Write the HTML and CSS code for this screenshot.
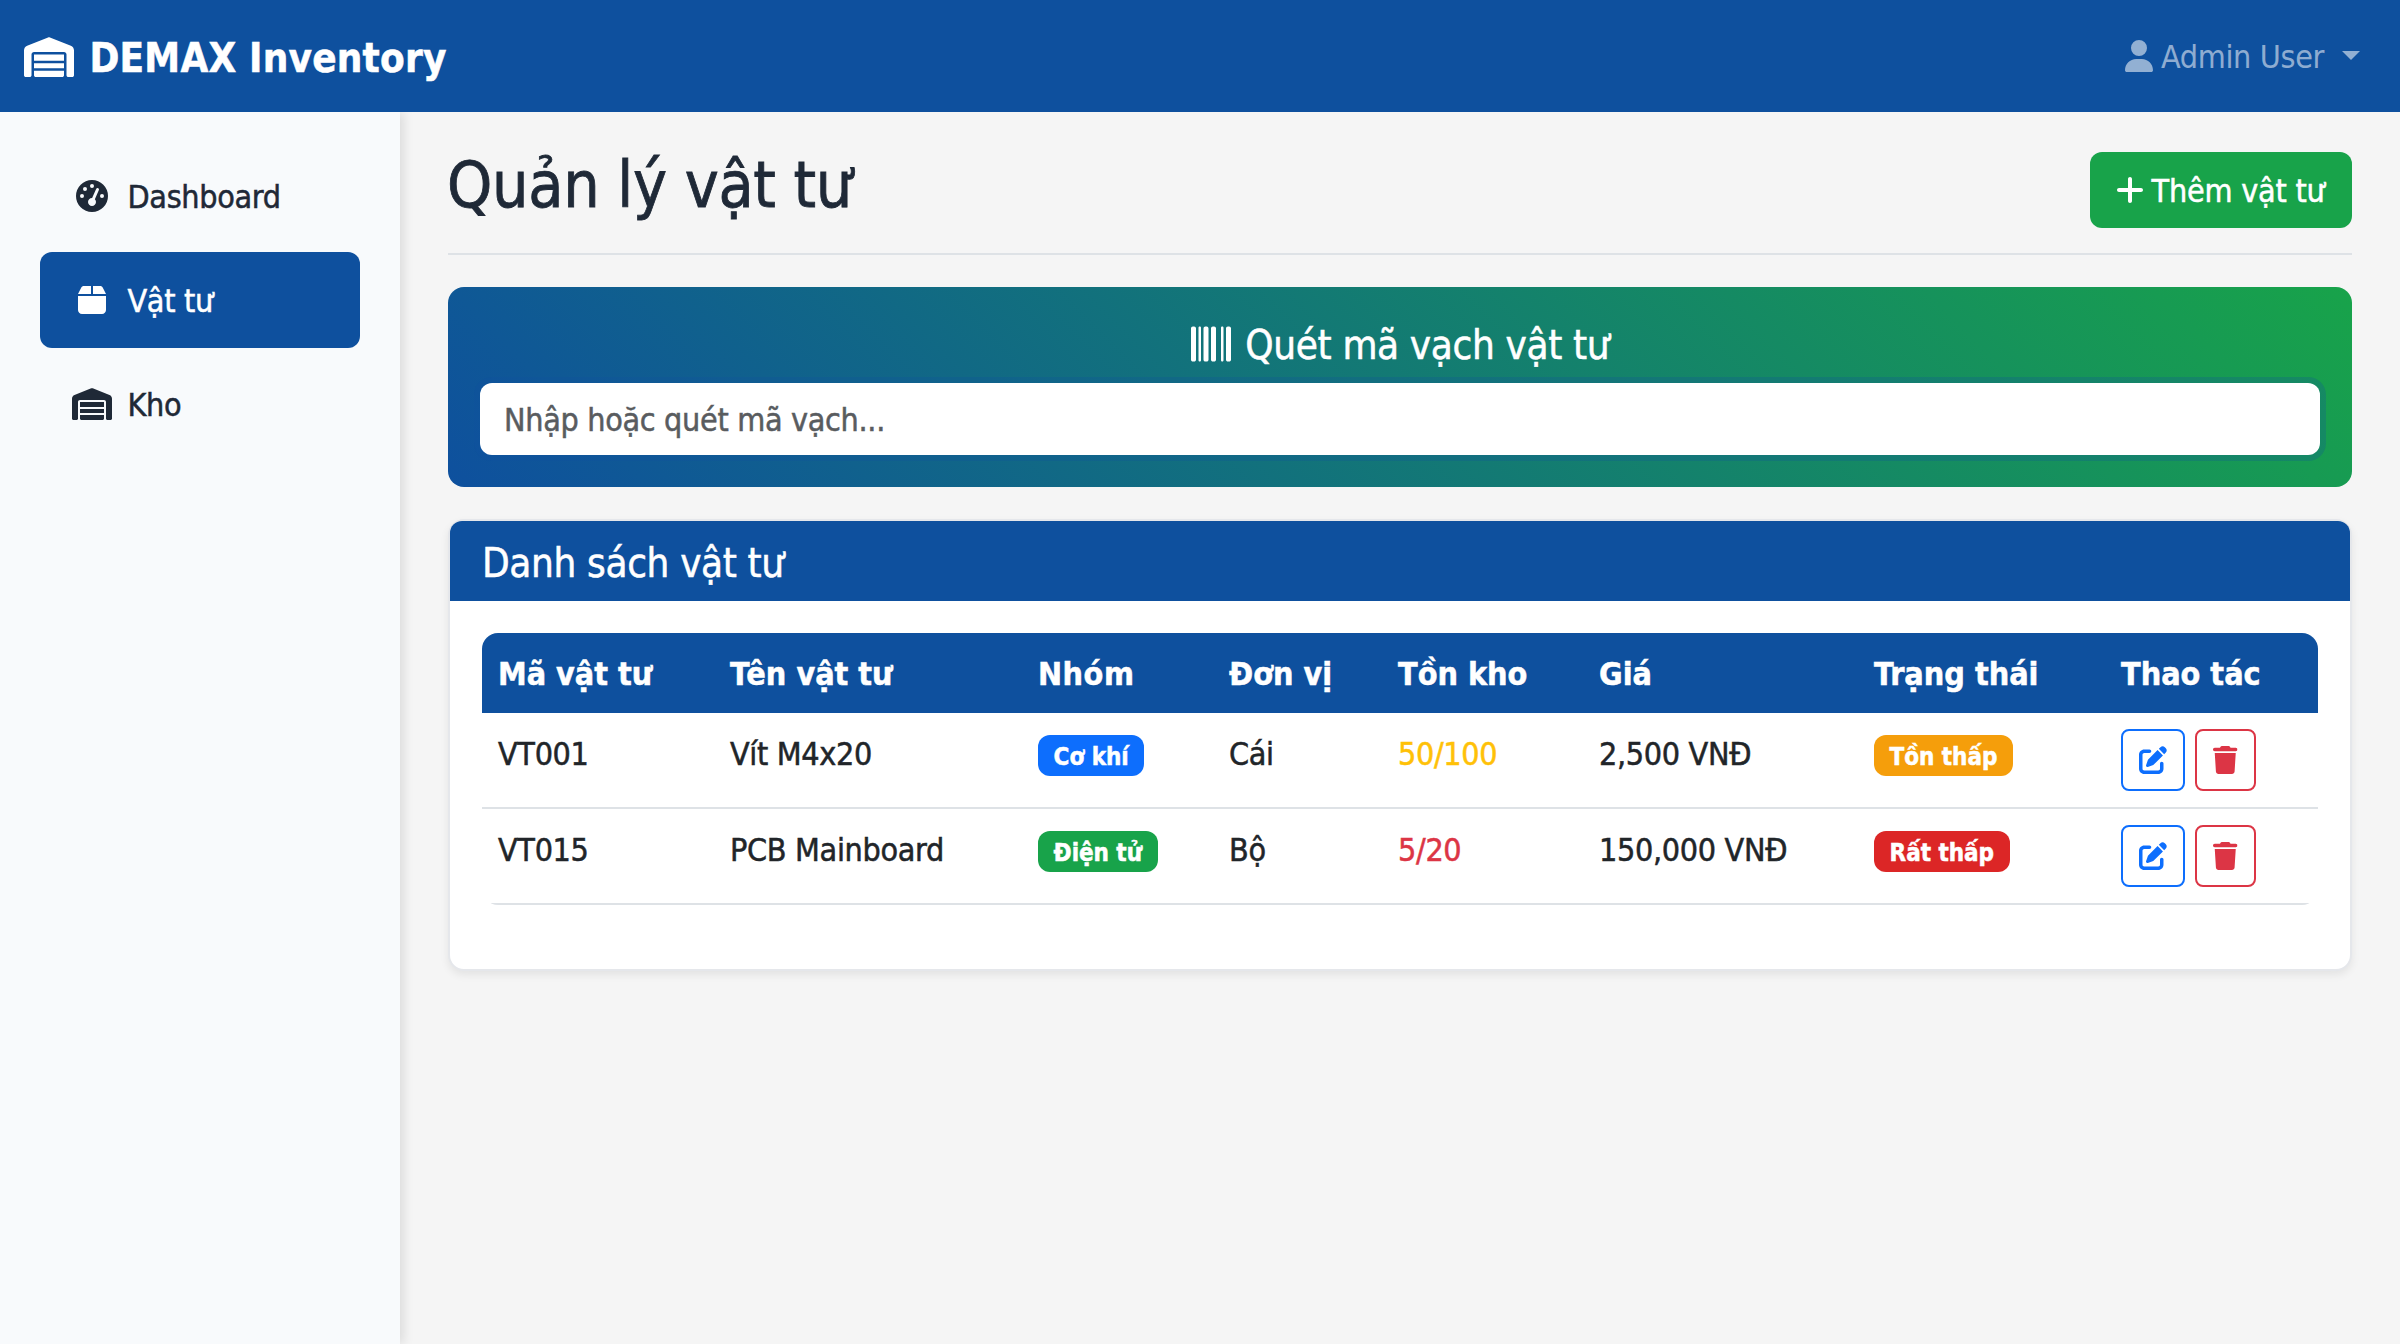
FILE: index.html
```html
<!DOCTYPE html>
<html lang="vi">
<head>
<meta charset="utf-8">
<title>DEMAX Inventory</title>
<link rel="stylesheet" href="styles.css">
</head>
<body>
<svg class="sprite" aria-hidden="true">
  <symbol id="warehouse" viewBox="0 0 640 512"><path d="M0 488V171.3c0-26.2 15.9-49.7 40.2-59.4L308.1 4.8c7.6-3.1 16.1-3.1 23.8 0L599.8 111.9c24.3 9.7 40.2 33.3 40.2 59.4V488c0 13.3-10.7 24-24 24H568c-13.3 0-24-10.7-24-24V224c0-17.7-14.3-32-32-32H128c-17.7 0-32 14.3-32 32V488c0 13.3-10.7 24-24 24H24c-13.3 0-24-10.7-24-24zm488 24l-336 0c-13.3 0-24-10.7-24-24V432H512l0 56c0 13.3-10.7 24-24 24zM128 400V336H512v64H128zm0-96V224H512l0 80H128z"/></symbol>
  <symbol id="gauge" viewBox="0 0 512 512"><path d="M0 256a256 256 0 1 1 512 0A256 256 0 1 1 0 256zM288 96a32 32 0 1 0 -64 0 32 32 0 1 0 64 0zM256 416c35.3 0 64-28.7 64-64c0-17.4-6.9-33.1-18.1-44.6L366 161.7c5.3-12.1-.2-26.3-12.3-31.6s-26.3 .2-31.6 12.3L257.9 288c-.6 0-1.3 0-1.9 0c-35.3 0-64 28.7-64 64s28.7 64 64 64zM176 144a32 32 0 1 0 -64 0 32 32 0 1 0 64 0zM96 288a32 32 0 1 0 0-64 32 32 0 1 0 0 64zm352-32a32 32 0 1 0 -64 0 32 32 0 1 0 64 0z"/></symbol>
  <symbol id="box" viewBox="0 0 448 512"><path d="M50.7 58.5L0 160H208V32H93.7C75.5 32 58.9 42.3 50.7 58.5zM240 160H448L397.3 58.5C389.1 42.3 372.5 32 354.3 32H240V160zm208 32H0V416c0 35.3 28.7 64 64 64H384c35.3 0 64-28.7 64-64V192z"/></symbol>
  <symbol id="user" viewBox="0 0 448 512"><path d="M224 256A128 128 0 1 0 224 0a128 128 0 1 0 0 256zm-45.7 48C79.8 304 0 383.8 0 482.3C0 498.7 13.3 512 29.7 512H418.3c16.4 0 29.7-13.3 29.7-29.7C448 383.8 368.2 304 269.7 304H178.3z"/></symbol>
  <symbol id="plus" viewBox="0 0 448 512"><path d="M256 80c0-17.7-14.3-32-32-32s-32 14.3-32 32V224H48c-17.7 0-32 14.3-32 32s14.3 32 32 32H192V432c0 17.7 14.3 32 32 32s32-14.3 32-32V288H400c17.7 0 32-14.3 32-32s-14.3-32-32-32H256V80z"/></symbol>
  <symbol id="barcode" viewBox="0 0 512 512"><path d="M24 32C10.7 32 0 42.7 0 56V456c0 13.3 10.7 24 24 24H40c13.3 0 24-10.7 24-24V56c0-13.3-10.7-24-24-24H24zm88 0c-8.8 0-16 7.2-16 16V464c0 8.8 7.2 16 16 16s16-7.2 16-16V48c0-8.8-7.2-16-16-16zm72 0c-13.3 0-24 10.7-24 24V456c0 13.3 10.7 24 24 24h16c13.3 0 24-10.7 24-24V56c0-13.3-10.7-24-24-24H184zm96 0c-13.3 0-24 10.7-24 24V456c0 13.3 10.7 24 24 24h16c13.3 0 24-10.7 24-24V56c0-13.3-10.7-24-24-24H280zM448 56V456c0 13.3 10.7 24 24 24h16c13.3 0 24-10.7 24-24V56c0-13.3-10.7-24-24-24H472c-13.3 0-24 10.7-24 24zm-64-8V464c0 8.8 7.2 16 16 16s16-7.2 16-16V48c0-8.8-7.2-16-16-16s-16 7.2-16 16z"/></symbol>
  <symbol id="edit" viewBox="0 0 512 512"><path d="M471.6 21.7c-21.9-21.9-57.3-21.9-79.2 0L362.3 51.7l97.9 97.9 30.1-30.1c21.9-21.9 21.9-57.3 0-79.2L471.6 21.7zm-299.2 220c-6.1 6.1-10.8 13.6-13.5 21.9l-29.6 88.8c-2.9 8.6-.6 18.1 5.8 24.6s15.9 8.7 24.6 5.8l88.8-29.6c8.2-2.7 15.7-7.4 21.9-13.5L437.7 172.3 339.7 74.3 172.4 241.7zM96 64C43 64 0 107 0 160V416c0 53 43 96 96 96H352c53 0 96-43 96-96V320c0-17.7-14.3-32-32-32s-32 14.3-32 32v96c0 17.7-14.3 32-32 32H96c-17.7 0-32-14.3-32-32V160c0-17.7 14.3-32 32-32h96c17.7 0 32-14.3 32-32s-14.3-32-32-32H96z"/></symbol>
  <symbol id="trash" viewBox="0 0 448 512"><path d="M135.2 17.7L128 32H32C14.3 32 0 46.3 0 64S14.3 96 32 96H416c17.7 0 32-14.3 32-32s-14.3-32-32-32H320l-7.2-14.3C307.4 6.8 296.3 0 284.2 0H163.8c-12.1 0-23.2 6.8-28.6 17.7zM416 128H32L53.2 467c1.6 25.3 22.6 45 47.9 45H346.9c25.3 0 46.3-19.7 47.9-45L416 128z"/></symbol>
</svg>

<header class="navbar">
  <a class="brand"><svg class="brand-icon"><use href="#warehouse"/></svg><span class="brand-text">DEMAX Inventory</span></a>
  <a class="user-menu"><svg class="icon-narrow"><use href="#user"/></svg><span class="user-name">Admin User</span><span class="caret"></span></a>
</header>

<div class="layout">
  <nav class="sidebar">
    <a class="nav-link"><svg class="nav-icon"><use href="#gauge"/></svg><span class="nav-text">Dashboard</span></a>
    <a class="nav-link active"><svg class="nav-icon"><use href="#box"/></svg><span class="nav-text">Vật tư</span></a>
    <a class="nav-link"><svg class="nav-icon"><use href="#warehouse"/></svg><span class="nav-text">Kho</span></a>
  </nav>

  <main class="main">
    <div class="page-head">
      <h1 class="page-title">Quản lý vật tư</h1>
      <button class="btn-add"><svg class="icon-narrow"><use href="#plus"/></svg><span class="btn-text">Thêm vật tư</span></button>
    </div>

    <section class="scanner">
      <h2 class="scanner-title"><svg class="scanner-icon"><use href="#barcode"/></svg><span>Quét mã vạch vật tư</span></h2>
      <input class="scanner-input" type="text" placeholder="Nhập hoặc quét mã vạch...">
    </section>

    <section class="card">
      <h2 class="card-header">Danh sách vật tư</h2>
      <div class="card-body">
        <table class="table">
          <colgroup>
            <col class="col-code"><col class="col-name"><col class="col-group"><col class="col-unit">
            <col class="col-stock"><col class="col-price"><col class="col-status"><col class="col-actions">
          </colgroup>
          <thead>
            <tr><th>Mã vật tư</th><th>Tên vật tư</th><th class="loose">Nhóm</th><th>Đơn vị</th><th>Tồn kho</th><th>Giá</th><th>Trạng thái</th><th>Thao tác</th></tr>
          </thead>
          <tbody>
            <tr>
              <td>VT001</td><td>Vít M4x20</td>
              <td><span class="badge badge-blue">Cơ khí</span></td>
              <td>Cái</td><td class="low">50/100</td><td>2,500 VNĐ</td>
              <td><span class="badge badge-amber">Tồn thấp</span></td>
              <td><div class="actions"><button class="btn-icon edit"><svg class="icon-edit"><use href="#edit"/></svg></button><button class="btn-icon delete"><svg class="icon-trash"><use href="#trash"/></svg></button></div></td>
            </tr>
            <tr>
              <td>VT015</td><td>PCB Mainboard</td>
              <td><span class="badge badge-green">Điện tử</span></td>
              <td>Bộ</td><td class="critical">5/20</td><td>150,000 VNĐ</td>
              <td><span class="badge badge-red">Rất thấp</span></td>
              <td><div class="actions"><button class="btn-icon edit"><svg class="icon-edit"><use href="#edit"/></svg></button><button class="btn-icon delete"><svg class="icon-trash"><use href="#trash"/></svg></button></div></td>
            </tr>
          </tbody>
        </table>
      </div>
    </section>
  </main>
</div>
</body>
</html>
```
FILE: styles.css
```css
*, *::before, *::after { box-sizing: border-box; }

:root {
  --primary: #0e509e;
  --success: #18a34a;
  --ink: #1f2937;
}

body {
  margin: 0;
  min-height: 1344px;
  display: flex;
  flex-direction: column;
  background: #f5f5f5;
  color: #212529;
  font-family: "DejaVu Sans Condensed", "DejaVu Sans", sans-serif;
  font-size: 32px;
  line-height: 48px;
  letter-spacing: -0.32px;
  -webkit-text-stroke: 0.5px currentColor;
  overflow: hidden;
}

svg { display: block; flex: none; fill: currentColor; }
.sprite { position: absolute; width: 0; height: 0; }
h1, h2 { margin: 0; font-weight: 400; }
button, input { font: inherit; letter-spacing: inherit; }

/* Top bar */
.navbar {
  height: 112px;
  padding: 0 40px 0 24px;
  display: flex;
  align-items: center;
  justify-content: space-between;
  background: var(--primary);
  color: #fff;
}
.brand {
  display: flex;
  align-items: center;
  gap: 15.5px;
  font-size: 40px;
  font-weight: 700;
  letter-spacing: 0.2px;
}
.brand-icon { width: 50px; height: 40px; margin-top: 2px; }
.brand-text { padding-top: 4px; }
.user-menu {
  display: flex;
  align-items: center;
  color: rgba(255, 255, 255, 0.55);
  -webkit-text-stroke-width: 0;
}
.icon-narrow { width: 28px; height: 32px; }
.user-name { padding: 2px 0 0 8px; letter-spacing: -0.35px; }
.caret {
  margin: -1px 0 0 18px;
  border: 9.6px solid transparent;
  border-top-color: currentColor;
  border-bottom: 0;
}

/* Shell */
.layout { flex: 1; display: flex; }
.sidebar {
  width: 400px;
  padding: 36px 40px;
  display: flex;
  flex-direction: column;
  gap: 8px;
  background: #f8fafc;
  box-shadow: 4px 0 10px rgba(0, 0, 0, 0.1);
  clip-path: inset(0 -20px 0 0);
}
.nav-link {
  height: 96px;
  padding: 0 32px;
  display: flex;
  align-items: center;
  gap: 15.5px;
  border-radius: 12px;
  color: var(--ink);
}
.nav-link.active { background: var(--primary); color: #fff; }
.nav-icon { width: 40px; height: 32px; }
.nav-text { padding-top: 2px; }

.main { flex: 1; padding: 32px 48px; }

/* Page heading */
.page-head {
  height: 111px;
  padding-bottom: 16px;
  margin-bottom: 32px;
  display: flex;
  align-items: flex-start;
  justify-content: space-between;
  border-bottom: 2px solid #dee2e6;
}
.page-title {
  padding-top: 3px;
  font-size: 64px;
  line-height: 77px;
  color: var(--ink);
  text-indent: -1px;
  -webkit-text-stroke-width: 0.8px;
}
.btn-add {
  width: 262px;
  height: 76px;
  margin-top: 8px;
  padding: 0 0 0 26px;
  display: flex;
  align-items: center;
  gap: 7.5px;
  border: 0;
  border-radius: 12px;
  background: var(--success);
  color: #fff;
}
.btn-text { padding-top: 2px; letter-spacing: -0.2px; }

/* Barcode scanner */
.scanner {
  height: 200px;
  padding: 32px;
  margin-bottom: 32px;
  border-radius: 16px;
  background: linear-gradient(45deg, var(--primary), var(--success));
  color: #fff;
}
.scanner-title {
  height: 48px;
  margin-bottom: 16px;
  display: flex;
  align-items: center;
  justify-content: center;
  gap: 14.5px;
  font-size: 40px;
  letter-spacing: -0.35px;
}
.scanner-title span { padding-top: 4px; }
.scanner-icon { width: 40px; height: 40px; margin-top: 2px; }
.scanner-input {
  display: block;
  width: 100%;
  height: 72px;
  padding: 2px 24px 0;
  border: 0;
  border-radius: 12px;
  outline: 0;
  background: #fff;
  box-shadow: 0 0 0 6px rgba(14, 80, 158, 0.25);
}
.scanner-input::placeholder { color: #595c5f; opacity: 1; }

/* Item list */
.card {
  height: 452px;
  border: 2px solid #e5e7eb;
  border-radius: 16px;
  background: #fff;
  box-shadow: 0 4px 8px rgba(0, 0, 0, 0.075);
}
.card-header {
  height: 80px;
  padding: 18px 32px 14px;
  border-radius: 12px 12px 0 0;
  background: var(--primary);
  color: #fff;
  font-size: 40px;
  letter-spacing: -0.35px;
}
.card-body { padding: 32px; }
.table {
  width: 100%;
  table-layout: fixed;
  border-spacing: 0;
  border-radius: 16px;
  overflow: hidden;
}
.col-code { width: 232px; }
.col-name { width: 308px; }
.col-group { width: 191px; }
.col-unit { width: 169px; }
.col-stock { width: 201px; }
.col-price { width: 275px; }
.col-status { width: 247px; }
.col-actions { width: 213px; }
th {
  padding: 17px 16px 15px;
  background: var(--primary);
  color: #fff;
  text-align: left;
  letter-spacing: 0;
}
th.loose { letter-spacing: 0.5px; }
td {
  height: 96px;
  padding: 17px 16px 0;
  vertical-align: top;
  border-bottom: 2px solid #dee2e6;
}
.low { color: #ffc107; }
.critical { color: #dc3545; }

.badge {
  display: inline-block;
  height: 41px;
  margin-top: 5px;
  padding: 2px 15.6px 0;
  border-radius: 12px;
  color: #fff;
  font-size: 24px;
  font-weight: 700;
  line-height: 40px;
  letter-spacing: -0.05px;
  vertical-align: top;
}
.badge-blue { background: #0d6efd; }
.badge-green { background: var(--success); }
.badge-amber { background: #f59e0b; }
.badge-red { background: #dc2626; }

.actions { display: flex; gap: 10px; margin-top: -1px; }
.btn-icon {
  height: 62px;
  padding: 0 16px;
  display: flex;
  align-items: center;
  border: 2px solid currentColor;
  border-radius: 8px;
  background: transparent;
}
.edit { color: #0d6efd; }
.delete { color: #dc3545; }
.icon-edit { width: 28px; height: 28px; }
.icon-trash { width: 24.5px; height: 28px; }
```
